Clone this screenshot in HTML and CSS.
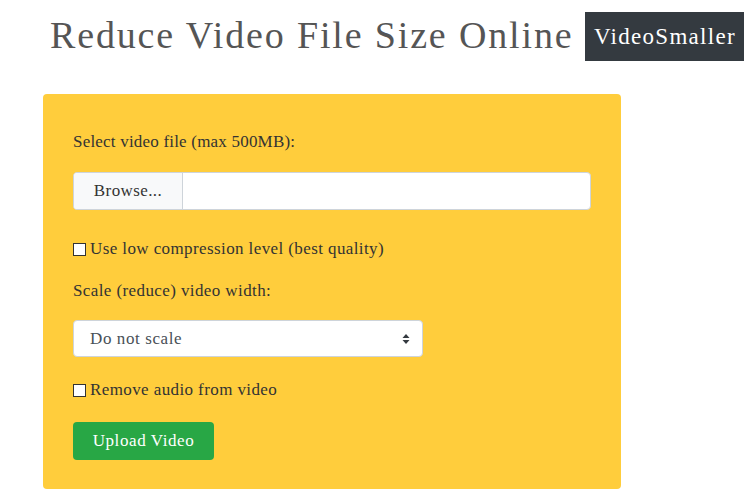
FILE: index.html
```html
<!DOCTYPE html>
<html>
<head>
<meta charset="utf-8">
<link rel="stylesheet" href="styles.css">
</head>
<body>
<header class="top">
  <h1 class="title">Reduce Video File Size Online</h1>
  <div class="brand">VideoSmaller</div>
</header>
<main class="card">
  <p class="label label-first">Select video file (max 500MB):</p>
  <div class="file">
    <span class="browse">Browse...</span>
    <span class="filename"></span>
  </div>
  <label class="check"><span class="box"></span>Use low compression level (best quality)</label>
  <p class="label">Scale (reduce) video width:</p>
  <div class="select">
    <span>Do not scale</span>
    <svg class="arrows" width="8" height="12" viewBox="0 0 8 12"><path d="M4 1 L7.5 5 H0.5 Z M4 11 L7.5 7 H0.5 Z" fill="#343a40"/></svg>
  </div>
  <label class="check"><span class="box"></span>Remove audio from video</label>
  <div class="btn">Upload Video</div>
</main>
</body>
</html>
```
FILE: styles.css
```css
html, body { margin: 0; padding: 0; background: #fff; }
body {
  font-family: "Liberation Serif", "DejaVu Serif", serif;
  color: #333;
}
.top {
  display: flex;
  align-items: flex-start;
  padding-left: 50px;
  height: 94px;
}
.title {
  margin: 11px 12px 0 0;
  font-weight: normal;
  font-size: 38px;
  line-height: 48px;
  letter-spacing: 1.85px;
  color: #555;
}
.brand {
  margin-top: 12px;
  width: 159px;
  height: 49px;
  background: #343a40;
  color: #fff;
  font-size: 23px;
  letter-spacing: 1.3px;
  line-height: 49px;
  text-align: center;
}
.card {
  margin-left: 43px;
  width: 578px;
  height: 395px;
  box-sizing: border-box;
  background: #ffcd3c;
  border-radius: 4px;
  padding: 30px 30px;
  letter-spacing: 0.4px;
}
.label {
  margin: 0;
  font-size: 17px;
  line-height: 32px;
}
.label-first {
  margin-top: 2px;
  letter-spacing: 0.2px;
}
.file {
  margin-top: 14px;
  display: flex;
  width: 518px;
  height: 38px;
  box-sizing: border-box;
  border: 1px solid #ced4da;
  border-radius: 4px;
  background: #fff;
  overflow: hidden;
}
.browse {
  width: 108px;
  background: #f8f9fa;
  border-right: 1px solid #ced4da;
  font-size: 17px;
  line-height: 36px;
  text-align: center;
  color: #333;
}
.check {
  display: flex;
  align-items: center;
  margin-top: 27px;
  font-size: 17px;
  line-height: 24px;
}
.box {
  width: 11px;
  height: 11px;
  border: 1px solid #333;
  background: #fff;
  margin-right: 4px;
}
.check + .label { margin-top: 14px; }
.select {
  margin-top: 13px;
  width: 350px;
  height: 37px;
  box-sizing: border-box;
  border: 1px solid #ced4da;
  border-radius: 4px;
  background: #fff;
  display: flex;
  align-items: center;
  justify-content: space-between;
  padding: 0 12px 0 16px;
  font-size: 17px;
  letter-spacing: 0.6px;
  color: #495057;
}
.select + .check { margin-top: 21px; }
.btn {
  margin-top: 20px;
  width: 141px;
  height: 38px;
  background: #28a745;
  border-radius: 4px;
  color: #fff;
  font-size: 17px;
  letter-spacing: 0.6px;
  line-height: 38px;
  text-align: center;
}
```
